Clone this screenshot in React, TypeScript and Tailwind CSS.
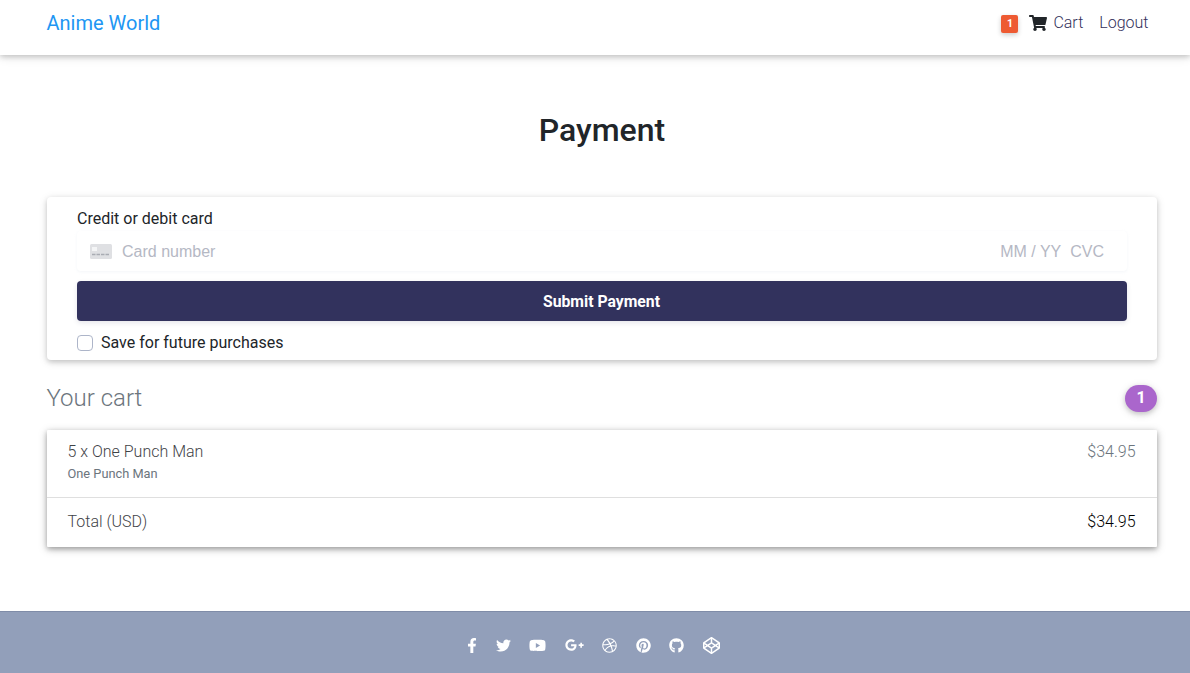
import { FaShoppingCart, FaFacebookF, FaTwitter, FaYoutube, FaGooglePlusG, FaDribbble, FaPinterest, FaGithub, FaCodepen } from "react-icons/fa";

const socialIcons = [
  { Icon: FaFacebookF, size: 15, width: 10 },
  { Icon: FaTwitter, size: 15, width: 15 },
  { Icon: FaYoutube, size: 17, width: 17 },
  { Icon: FaGooglePlusG, size: 20, width: 19 },
  { Icon: FaDribbble, size: 15, width: 15 },
  { Icon: FaPinterest, size: 15, width: 15 },
  { Icon: FaGithub, size: 15, width: 15 },
  { Icon: FaCodepen, size: 17, width: 17 },
];

function CardIcon() {
  return (
    <svg width="22" height="15" viewBox="0 0 22 15" className="shrink-0">
      <rect width="22" height="15" rx="1.5" fill="#dfe0e3" />
      <rect x="2" y="3" width="5" height="4" fill="#f4f5f6" />
      <path d="M2 10.5h18" stroke="#a9acb3" strokeWidth="1.5" strokeDasharray="3.5 1" />
    </svg>
  );
}

export default function App() {
  return (
    <div className="min-h-[673px] flex flex-col bg-white font-['Roboto',sans-serif] overflow-hidden">
      {/* Navbar */}
      <nav className="h-[55px] bg-white flex items-center justify-between pl-[46.5px] pr-[41.5px] shadow-[0_2px_5px_0_rgba(0,0,0,0.16),0_2px_10px_0_rgba(0,0,0,0.12)] relative">
        <a className="text-[20px] text-[#2196f3] -mt-[9px]">Anime World</a>
        <div className="flex items-center text-[16px] font-light text-[#33305a] -mt-[9px]">
          <span className="w-[17px] h-[18px] rounded-[2px] bg-[#ee5a32] text-white text-[10.5px] font-bold flex items-center justify-center shadow-[0_2px_5px_0_rgba(0,0,0,0.2)] mt-[2px]">1</span>
          <FaShoppingCart className="ml-[11px] text-[#212529]" size={18} />
          <span className="ml-[6px]">Cart</span>
          <span className="ml-[16px]">Logout</span>
        </div>
      </nav>

      <main className="pl-[47px] pr-[33px] flex-1">
        <h1 className="mt-[55px] text-center text-[32px] leading-[40px] font-medium text-[#212529]">Payment</h1>

        {/* Payment card */}
        <section className="mt-[47px] h-[163px] rounded-[4px] bg-white px-[30px] pt-[10px] shadow-[0_2px_5px_0_rgba(0,0,0,0.16),0_2px_10px_0_rgba(0,0,0,0.12)]">
          <div className="text-[16px] leading-[24px] text-[#212529]">Credit or debit card</div>
          <div className="h-[40px] rounded-[4px] bg-white flex items-center pl-[13px] pr-[23px] text-[16px] text-[#b5b8c4] font-['Liberation_Sans',sans-serif] shadow-[0_1px_3px_0_rgba(230,235,241,0.45)]">
            <CardIcon />
            <span className="ml-[10px] pt-[2px]">Card number</span>
            <span className="ml-auto pt-[2px]">MM / YY</span>
            <span className="ml-[9px] pt-[2px]">CVC</span>
          </div>
          <button className="mt-[10px] w-full h-[40px] pt-[2px] pr-[1px] rounded-[4px] bg-[#32325d] text-white text-[15.75px] font-bold shadow-[0_2px_5px_0_rgba(50,50,93,0.12)]">Submit Payment</button>
          <label className="mt-[11px] flex items-center text-[16px] leading-[22px] text-[#212529]">
            <span className="w-[16px] h-[16px] rounded-[4px] border border-[#adb5c9] bg-white" />
            <span className="ml-[8px]">Save for future purchases</span>
          </label>
        </section>

        {/* Cart heading */}
        <div className="mt-[22px] flex items-center justify-between">
          <h2 className="-ml-[0.5px] text-[24px] leading-[32px] font-light text-[#6c757d]">Your cart</h2>
          <span className="w-[32px] h-[27px] rounded-full bg-[#aa66cc] text-white text-[16px] font-bold flex items-center justify-center shadow-[0_2px_5px_0_rgba(0,0,0,0.16),0_2px_10px_0_rgba(0,0,0,0.12)]">1</span>
        </div>

        {/* Cart list */}
        <section className="mt-[16px] h-[117px] bg-white rounded-[1px] shadow-[0_2px_5px_0_rgba(0,0,0,0.26),0_2px_10px_0_rgba(0,0,0,0.22)] font-light">
          <div className="h-[68px] pl-[20.5px] pr-[21.5px] pt-[11px] flex justify-between border-b border-[#dfdfdf]">
            <div>
              <div className="text-[16px] leading-[22px] text-[#3f4347]">5 x One Punch Man</div>
              <div className="mt-[1px] text-[12.8px] leading-[19px] text-[#6c757d] font-normal">One Punch Man</div>
            </div>
            <span className="text-[16px] leading-[22px] text-[#6c757d]">$34.95</span>
          </div>
          <div className="h-[48px] pl-[20.5px] pr-[21.5px] flex items-center justify-between text-[16px]">
            <span className="text-[#3f4347]">Total (USD)</span>
            <span className="text-[#000000]">$34.95</span>
          </div>
        </section>
      </main>

      {/* Footer */}
      <footer className="h-[62px] bg-[#929fba] border-t border-[#7f8ca8] flex items-center justify-center gap-[18.5px] pr-[3px] pt-[5px] text-white">
        {socialIcons.map(({ Icon, size, width }, i) => (
          <span key={i} className="flex justify-center" style={{ width }}>
            <Icon size={size} />
          </span>
        ))}
      </footer>
    </div>
  );
}
